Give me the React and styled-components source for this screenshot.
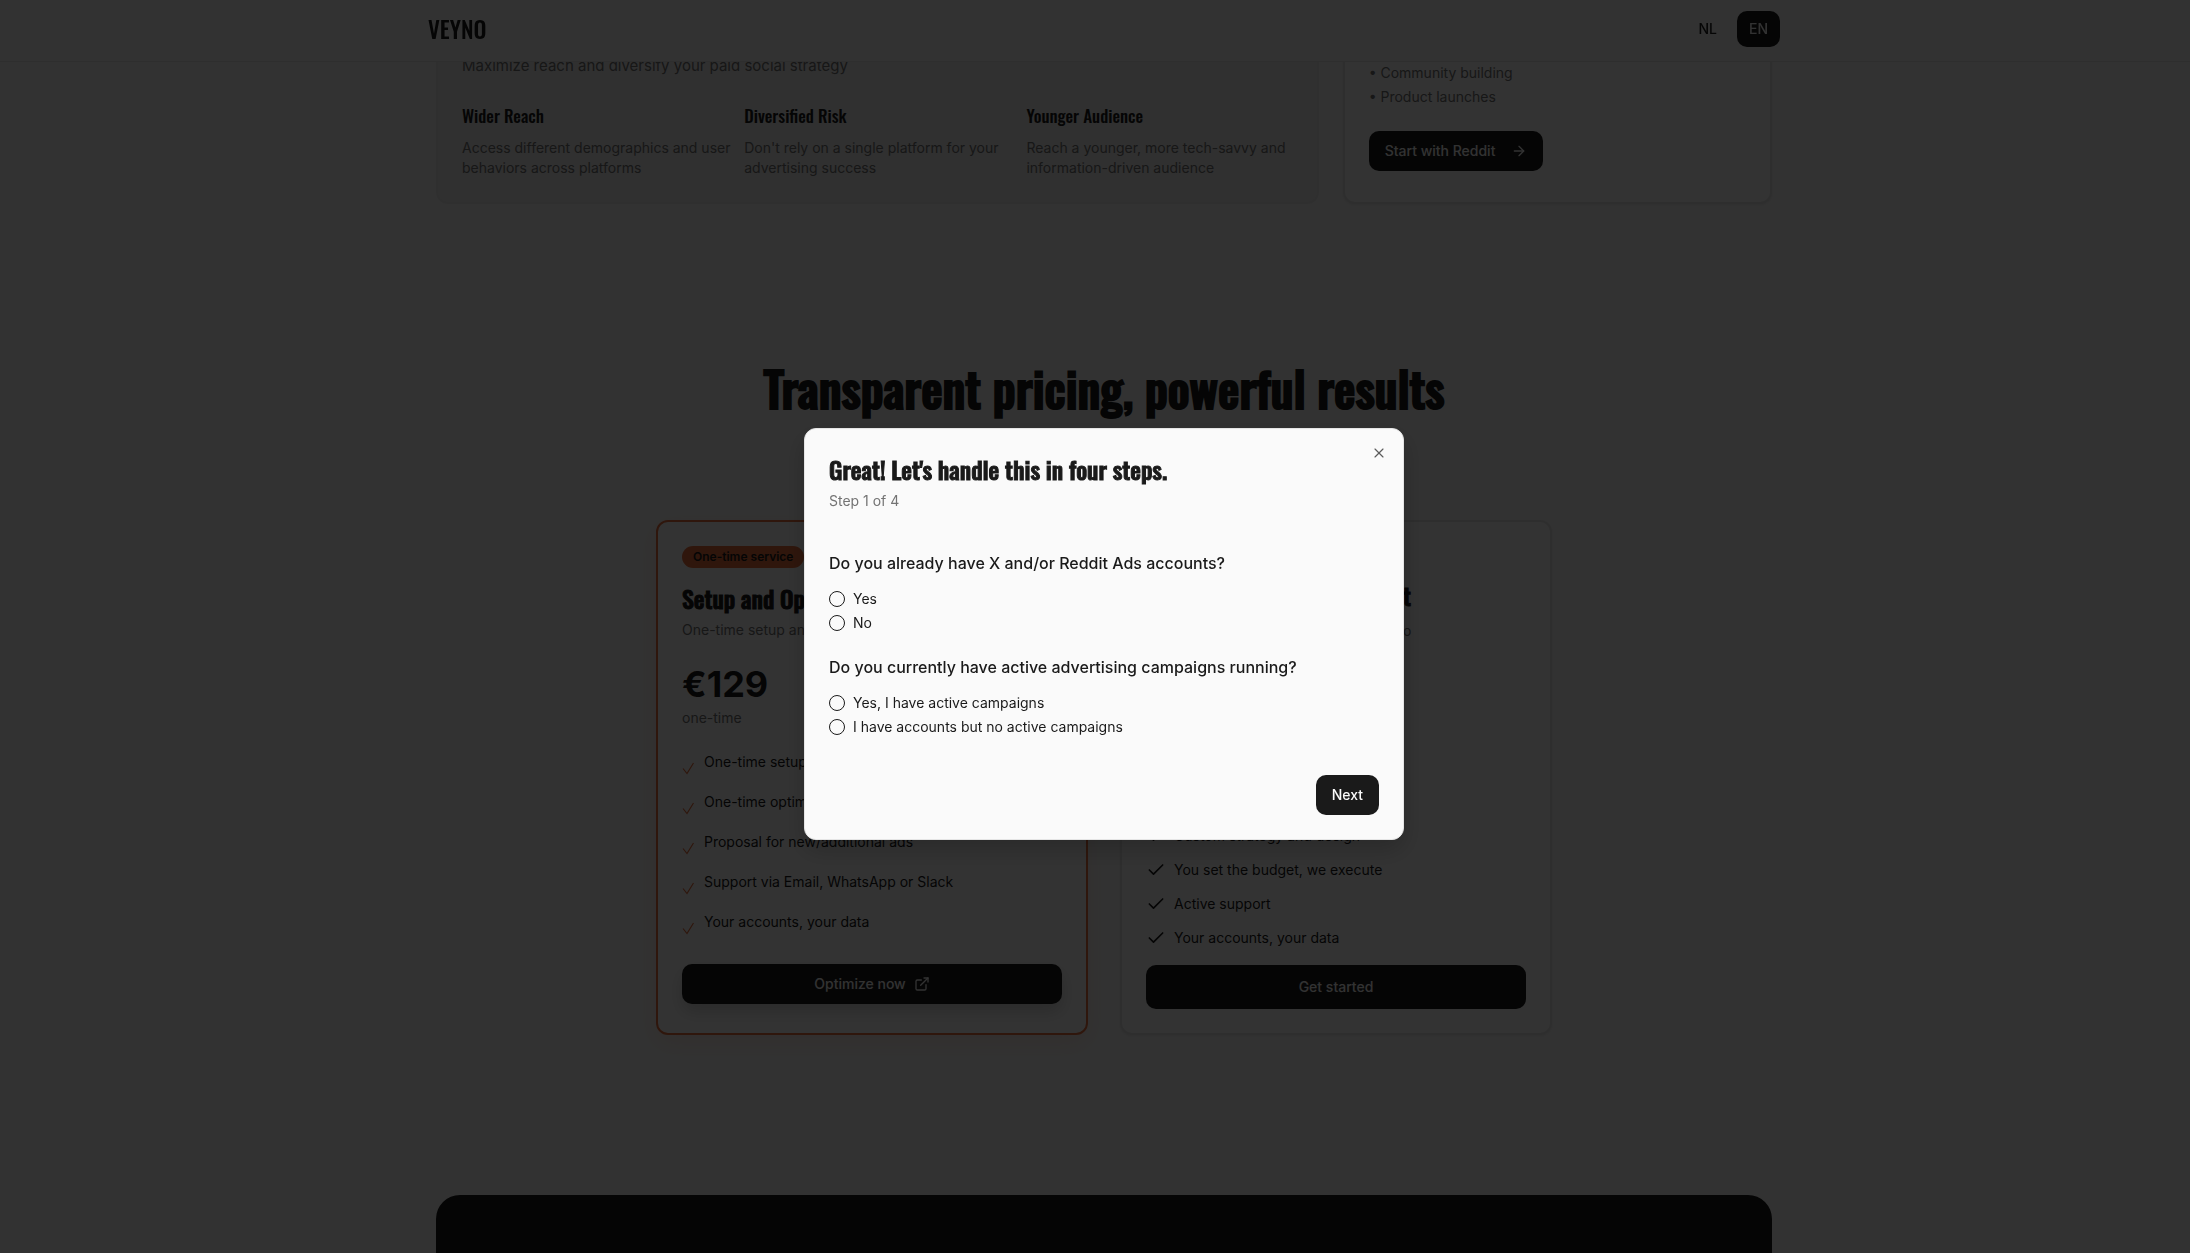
import React from "react";
import styled, { createGlobalStyle } from "styled-components";
import { ArrowRight, Check, ExternalLink, X } from "lucide-react";

const ink = "#1a1a1a";
const paper = "#fafafa";
const muted = "#737373";
const line = "#e6e6e6";
const accent = "#e8703f";
const display = `Oswald, "Liberation Sans", sans-serif`;

const GlobalStyle = createGlobalStyle`
  *, *::before, *::after { box-sizing: border-box; }
  html, body { margin: 0; height: 100%; overflow: hidden; }
  body {
    background: ${paper};
    color: ${ink};
    font-family: Inter, "Liberation Sans", sans-serif;
    font-size: 14px;
    line-height: 20px;
  }
  h1, h2, h3, h4, p, ul { margin: 0; padding: 0; }
  ul { list-style: none; }
  button { font: inherit; cursor: pointer; border: 0; }
`;

const Page = styled.div`
  height: 100vh;
  overflow: hidden;
`;

const Header = styled.header`
  position: fixed;
  inset: 0 0 auto 0;
  z-index: 10;
  padding-left: 18px;
  background: rgba(250, 250, 250, 0.95);
  backdrop-filter: blur(8px);
  border-bottom: 1px solid ${line};
`;

const HeaderInner = styled.div`
  max-width: 1400px;
  margin: 0 auto;
  padding: 11px 24px 14px;
  display: flex;
  align-items: center;
  justify-content: space-between;
`;

const Brand = styled.a`
  font-family: ${display};
  font-size: 23px;
  line-height: 32px;
  font-weight: 500;
  color: ${ink};
  text-decoration: none;
`;

const Languages = styled.nav`
  display: flex;
  gap: 8px;
`;

const LanguageButton = styled.button`
  height: 36px;
  padding: 0 12px;
  border-radius: 10px;
  font-weight: 500;
  color: ${(p) => (p.$active ? paper : ink)};
  background: ${(p) => (p.$active ? ink : "transparent")};
`;

const Main = styled.main`
  padding-left: 18px;
`;

const Section = styled.section`
  max-width: 1400px;
  margin: 0 auto;
  padding: 0 32px;
`;

const Showcase = styled.div`
  display: grid;
  grid-template-columns: repeat(3, minmax(0, 1fr));
  gap: 24px;
`;

const ReachCard = styled.article`
  grid-column: span 2;
  padding: 54px 24px 24px;
  border: 2px solid #ebebeb;
  border-top: 0;
  border-radius: 0 0 12px 12px;
  background: #eeeeee;
`;

const Lead = styled.p`
  font-size: 15px;
  line-height: 24px;
  color: ${muted};
`;

const Benefits = styled.div`
  display: grid;
  grid-template-columns: repeat(3, minmax(0, 1fr));
  gap: 16px;
  margin-top: 24px;
`;

const BenefitTitle = styled.h4`
  font-family: ${display};
  font-size: 17px;
  line-height: 28px;
  font-weight: 500;
  margin-bottom: 8px;
`;

const Muted = styled.p`
  color: ${muted};
`;

const BenefitText = styled(Muted)`
  white-space: pre;
`;

const RedditCard = styled.article`
  padding: 63px 24px 24px;
  border: 2px solid ${line};
  border-top: 0;
  border-radius: 0 0 12px 12px;
  background: #ffffff;
  box-shadow: 0 1px 3px rgba(0, 0, 0, 0.08);
`;

const UseCases = styled.ul`
  display: grid;
  gap: 4px;
  margin-bottom: 24px;
  color: ${muted};
`;

const Button = styled.button`
  display: inline-flex;
  align-items: center;
  justify-content: center;
  gap: ${(p) => p.$gap || 8}px;
  width: ${(p) => (p.$block ? "100%" : "auto")};
  height: ${(p) => (p.$large ? 44 : 40)}px;
  padding: 0 16px;
  border-radius: 10px;
  background: ${ink};
  color: ${paper};
  font-weight: 500;
  box-shadow: ${(p) => (p.$raised ? "0 8px 16px rgba(0, 0, 0, 0.16)" : "none")};
`;

const Pricing = styled.section`
  padding: 160px 32px 83px;
`;

const PricingTitle = styled.h2`
  font-family: ${display};
  font-size: 48px;
  line-height: 48px;
  font-weight: 500;
  -webkit-text-stroke: 2px ${ink};
  text-align: center;
`;

const Plans = styled.div`
  max-width: 896px;
  margin: 108px auto 0;
  display: grid;
  grid-template-columns: repeat(2, minmax(0, 1fr));
  gap: 32px;
`;

const Plan = styled.article`
  display: flex;
  flex-direction: column;
  align-items: flex-start;
  padding: ${(p) => (p.$featured ? "24px 24px 29px" : "57px 24px 24px")};
  border: 2px solid ${(p) => (p.$featured ? accent : line)};
  border-radius: 12px;
  background: #ffffff;
  box-shadow: ${(p) =>
    p.$featured ? "0 8px 24px rgba(232, 112, 63, 0.14)" : "0 1px 3px rgba(0, 0, 0, 0.08)"};
`;

const Badge = styled.span`
  padding: 3px 11px;
  border-radius: 11px;
  background: ${accent};
  font-size: 12px;
  line-height: 16px;
  font-weight: 600;
  margin-bottom: 14px;
`;

const PlanTitle = styled.h3`
  font-family: ${display};
  font-size: 24px;
  line-height: 32px;
  font-weight: 500;
  -webkit-text-stroke: 1px ${ink};
  margin-bottom: ${(p) => (p.$spaced ? 10 : 6)}px;
  white-space: nowrap;
`;

const Price = styled.strong`
  font-size: 36px;
  line-height: 40px;
  font-weight: 700;
  margin: 24px 0 4px;
`;

const Features = styled.ul`
  display: grid;
  gap: 20px;
  margin: 24px 0 32px;
`;

const Feature = styled.li`
  display: flex;
  gap: 8px;
`;

const ThinCheckIcon = styled.svg`
  width: 14px;
  height: 20px;
  overflow: visible;
  fill: none;
  stroke: ${accent};
  stroke-width: 1.2;
`;

const ManagedFeatures = styled.ul`
  display: grid;
  gap: 12px;
  margin: auto 0 16px;
`;

const ManagedFeature = styled.li`
  display: flex;
  align-items: center;
  gap: 8px;
  line-height: 22px;
`;

const Closing = styled.div`
  height: 240px;
  margin-top: 77px;
  border-radius: 24px;
  background: ${ink};
`;

const Overlay = styled.div`
  position: fixed;
  inset: 0;
  z-index: 20;
  display: flex;
  align-items: center;
  justify-content: center;
  padding: 15px 0 0 18px;
  background: rgba(0, 0, 0, 0.8);
`;

const Dialog = styled.form`
  position: relative;
  width: 100%;
  max-width: 600px;
  padding: 24px;
  border: 1px solid #e5e5e5;
  border-radius: 12px;
  background: ${paper};
  box-shadow: 0 10px 24px rgba(0, 0, 0, 0.2);
`;

const DialogTitle = styled.h2`
  font-family: ${display};
  font-size: 24px;
  line-height: 32px;
  font-weight: 500;
  -webkit-text-stroke: 1px ${ink};
  margin-bottom: 6px;
`;

const CloseButton = styled.button`
  position: absolute;
  top: 16px;
  right: 16px;
  display: flex;
  padding: 0;
  background: transparent;
  color: ${ink};
  opacity: 0.7;
`;

const Questions = styled.div`
  display: grid;
  gap: 24px;
  margin: 40px 0;
`;

const Question = styled.fieldset`
  margin: 0;
  padding: 0;
  border: 0;
  min-width: 0;
`;

const Legend = styled.legend`
  padding: 0;
  margin-bottom: 16px;
  font-size: 16px;
  line-height: 24px;
  font-weight: 500;
`;

const Options = styled.div`
  display: grid;
  gap: 8px;
`;

const Option = styled.label`
  display: flex;
  align-items: center;
  gap: 8px;
  line-height: 16px;
`;

const Radio = styled.input`
  appearance: none;
  width: 16px;
  height: 16px;
  margin: 0;
  border: 1px solid ${ink};
  border-radius: 50%;

  &:checked {
    box-shadow: inset 0 0 0 3px ${paper};
    background: ${ink};
  }
`;

const Actions = styled.div`
  display: flex;
  justify-content: flex-end;
`;

const benefits = [
  ["Wider Reach", "Access different demographics and user\nbehaviors across platforms"],
  ["Diversified Risk", "Don't rely on a single platform for your\nadvertising success"],
  ["Younger Audience", "Reach a younger, more tech-savvy and\ninformation-driven audience"],
];

const setupFeatures = [
  "One-time setup",
  "One-time optimization",
  "Proposal for new/additional ads",
  "Support via Email, WhatsApp or Slack",
  "Your accounts, your data",
];

const managedFeatures = [
  "Custom strategy and design",
  "You set the budget, we execute",
  "Active support",
  "Your accounts, your data",
];

const questions = [
  {
    name: "accounts",
    text: "Do you already have X and/or Reddit Ads accounts?",
    options: ["Yes", "No"],
  },
  {
    name: "campaigns",
    text: "Do you currently have active advertising campaigns running?",
    options: ["Yes, I have active campaigns", "I have accounts but no active campaigns"],
  },
];

function ThinCheck() {
  return (
    <ThinCheckIcon viewBox="0 0 14 20" aria-hidden="true">
      <path d="M1 16.500 L5 21.500 L11.500 11" />
    </ThinCheckIcon>
  );
}

function StepDialog() {
  return (
    <Overlay>
      <Dialog role="dialog" aria-modal="true" aria-labelledby="dialog-title" onSubmit={(e) => e.preventDefault()}>
        <DialogTitle id="dialog-title">Great! Let's handle this in four steps.</DialogTitle>
        <Muted>Step 1 of 4</Muted>
        <Questions>
          {questions.map((q) => (
            <Question key={q.name}>
              <Legend>{q.text}</Legend>
              <Options>
                {q.options.map((option) => (
                  <Option key={option}>
                    <Radio type="radio" name={q.name} value={option} />
                    {option}
                  </Option>
                ))}
              </Options>
            </Question>
          ))}
        </Questions>
        <Actions>
          <Button type="submit">Next</Button>
        </Actions>
        <CloseButton type="button" aria-label="Close">
          <X size={16} strokeWidth={1.75} />
        </CloseButton>
      </Dialog>
    </Overlay>
  );
}

export default function App() {
  return (
    <Page>
      <GlobalStyle />
      <Header>
        <HeaderInner>
          <Brand href="#">VEYNO</Brand>
          <Languages aria-label="Language">
            <LanguageButton type="button">NL</LanguageButton>
            <LanguageButton type="button" $active>EN</LanguageButton>
          </Languages>
        </HeaderInner>
      </Header>
      <Main>
        <Section>
          <Showcase>
            <ReachCard>
              <Lead>Maximize reach and diversify your paid social strategy</Lead>
              <Benefits>
                {benefits.map(([title, text]) => (
                  <div key={title}>
                    <BenefitTitle>{title}</BenefitTitle>
                    <BenefitText>{text}</BenefitText>
                  </div>
                ))}
              </Benefits>
            </ReachCard>
            <RedditCard>
              <UseCases>
                <li>• Community building</li>
                <li>• Product launches</li>
              </UseCases>
              <Button type="button" $gap={16}>
                Start with Reddit
                <ArrowRight size={16} />
              </Button>
            </RedditCard>
          </Showcase>
        </Section>
        <Pricing>
          <PricingTitle>Transparent pricing, powerful results</PricingTitle>
          <Plans>
            <Plan $featured>
              <Badge>One-time service</Badge>
              <PlanTitle>Setup and Optimization</PlanTitle>
              <Muted>One-time setup and optimization</Muted>
              <Price>€129</Price>
              <Muted>one-time</Muted>
              <Features>
                {setupFeatures.map((text) => (
                  <Feature key={text}>
                    <ThinCheck />
                    {text}
                  </Feature>
                ))}
              </Features>
              <Button type="button" $block $raised>
                Optimize now
                <ExternalLink size={16} />
              </Button>
            </Plan>
            <Plan>
              <PlanTitle $spaced>Total Campaign Management</PlanTitle>
              <Muted>Full campaign management, ready to go</Muted>
              <ManagedFeatures>
                {managedFeatures.map((text) => (
                  <ManagedFeature key={text}>
                    <Check size={20} />
                    {text}
                  </ManagedFeature>
                ))}
              </ManagedFeatures>
              <Button type="button" $block $large>
                Get started
              </Button>
            </Plan>
          </Plans>
        </Pricing>
        <Section>
          <Closing />
        </Section>
      </Main>
      <StepDialog />
    </Page>
  );
}
